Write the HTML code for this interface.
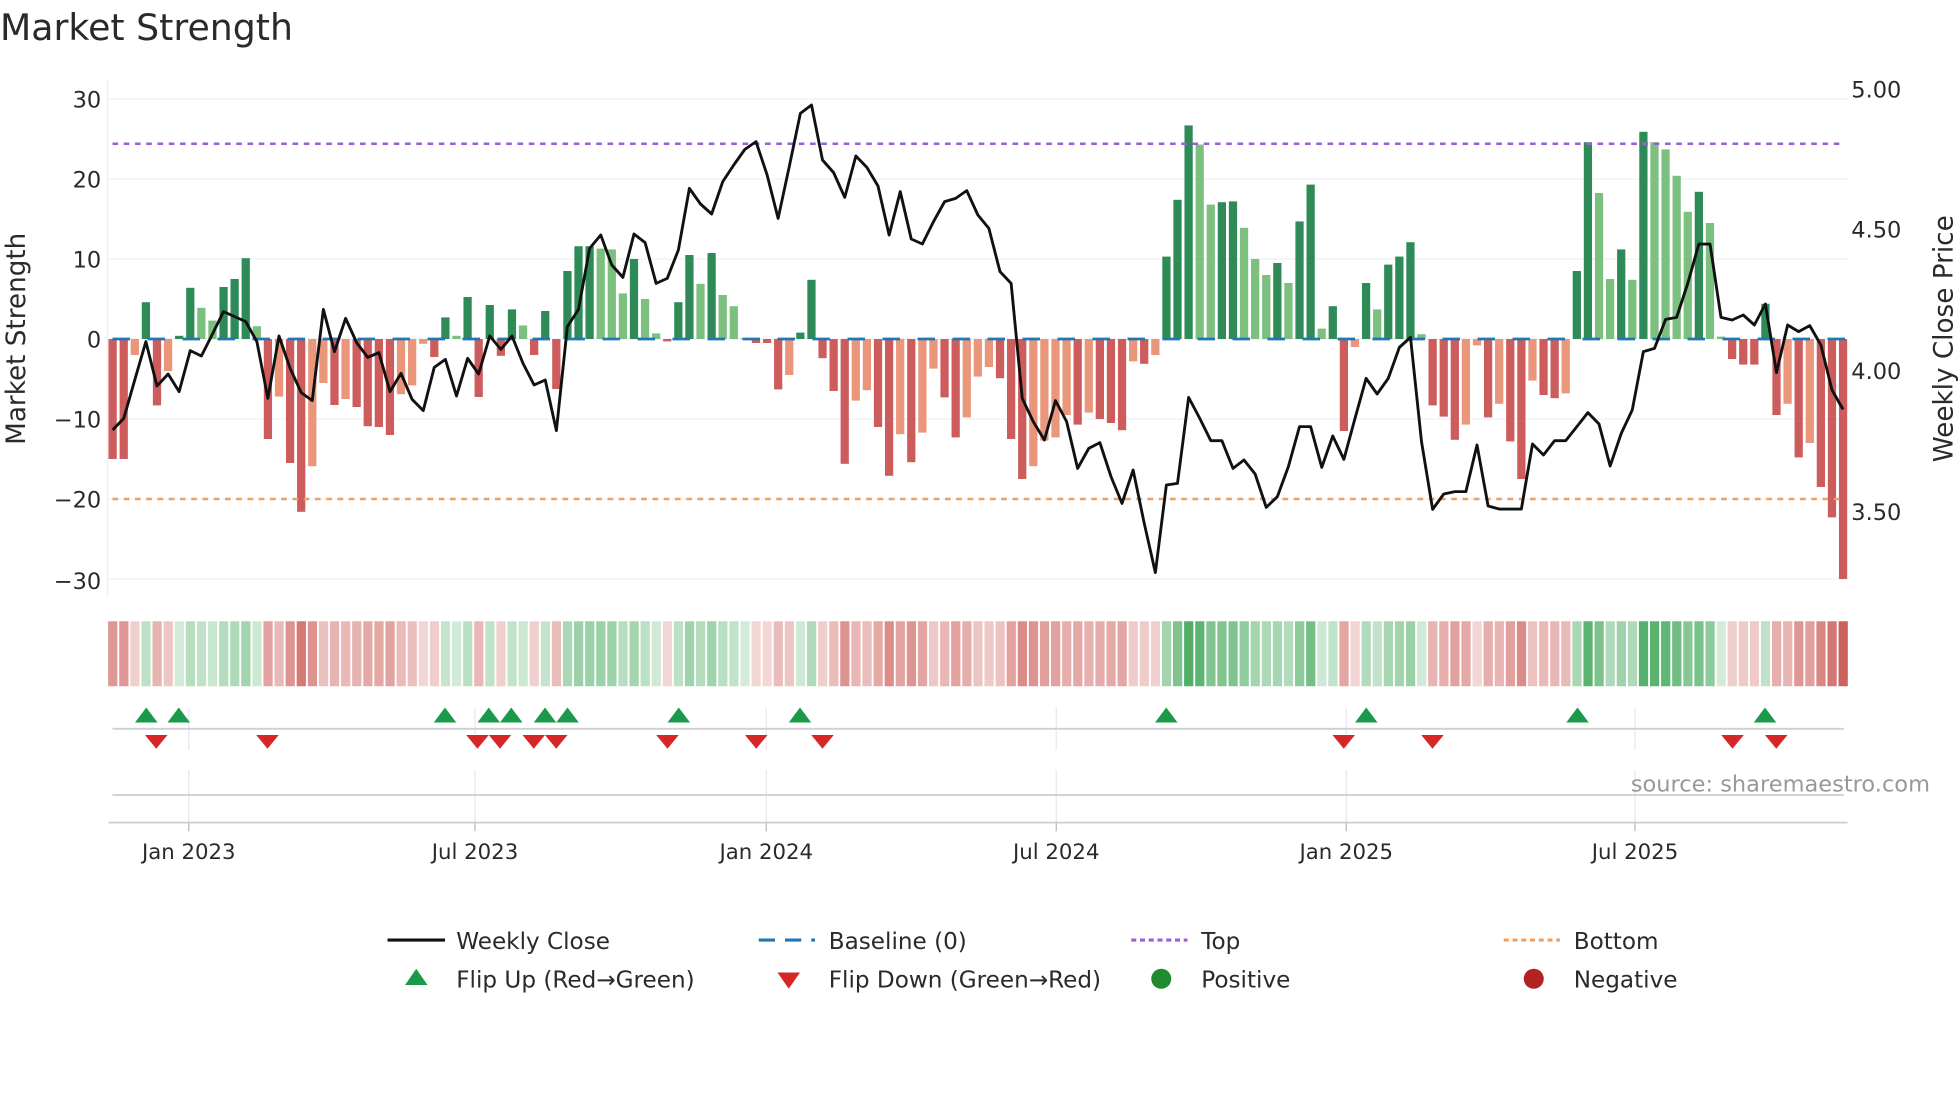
<!DOCTYPE html>
<html><head><meta charset="utf-8">
<style>
html,body{margin:0;padding:0;background:#fff;}
svg{display:block;}
text{font-family:"DejaVu Sans","Liberation Sans",sans-serif;fill:#2a2a2a;}
</style></head>
<body>
<svg id="s" width="1960" height="1102" viewBox="0 0 1568 881.6" xmlns="http://www.w3.org/2000/svg">
<rect width="1568" height="882" fill="#fff"/>
<text x="0" y="32" font-size="29">Market Strength</text>
<g id="grid"></g>
<g id="bars"></g>
<g id="lines"></g>
<g id="strip"></g>
<g id="marks"></g>
<g id="axes">
<text x="81" y="86" font-size="18" text-anchor="end">30</text>
<text x="81" y="150" font-size="18" text-anchor="end">20</text>
<text x="81" y="214" font-size="18" text-anchor="end">10</text>
<text x="81" y="278" font-size="18" text-anchor="end">0</text>
<text x="81" y="342" font-size="18" text-anchor="end">−10</text>
<text x="81" y="406" font-size="18" text-anchor="end">−20</text>
<text x="81" y="471" font-size="18" text-anchor="end">−30</text>
<text x="1481" y="78" font-size="18">5.00</text>
<text x="1481" y="190" font-size="18">4.50</text>
<text x="1481" y="303" font-size="18">4.00</text>
<text x="1481" y="416" font-size="18">3.50</text>
<text transform="translate(20,271) rotate(-90)" font-size="21" text-anchor="middle">Market Strength</text>
<text transform="translate(1562,271) rotate(-90)" font-size="21" text-anchor="middle">Weekly Close Price</text>
<text x="151" y="687" font-size="17" text-anchor="middle">Jan 2023</text>
<text x="380" y="687" font-size="17" text-anchor="middle">Jul 2023</text>
<text x="613" y="687" font-size="17" text-anchor="middle">Jan 2024</text>
<text x="845" y="687" font-size="17" text-anchor="middle">Jul 2024</text>
<text x="1077" y="687" font-size="17" text-anchor="middle">Jan 2025</text>
<text x="1308" y="687" font-size="17" text-anchor="middle">Jul 2025</text>
<text x="1544" y="633" font-size="18" text-anchor="end" style="fill:#999">source: sharemaestro.com</text>
</g>
<g id="legend" font-size="18.5">
<line x1="310" y1="752" x2="356" y2="752" stroke="#111" stroke-width="2.5"/>
<text x="365" y="759">Weekly Close</text>
<line x1="607" y1="752" x2="652" y2="752" stroke="#1f77b4" stroke-width="2.5" stroke-dasharray="13,8"/>
<text x="663" y="759">Baseline (0)</text>
<line x1="905" y1="752" x2="950" y2="752" stroke="#9a5fd8" stroke-width="2.5" stroke-dasharray="4,3"/>
<text x="961" y="759">Top</text>
<line x1="1203" y1="752" x2="1248" y2="752" stroke="#f0a060" stroke-width="2.5" stroke-dasharray="4,3"/>
<text x="1259" y="759">Bottom</text>
<polygon points="324,788 342,788 333,775" fill="#1a9a48"/>
<text x="365" y="790">Flip Up (Red→Green)</text>
<polygon points="622,778 640,778 631,791" fill="#d62728"/>
<text x="663" y="790">Flip Down (Green→Red)</text>
<circle cx="929" cy="783" r="8" fill="#1e8c2e"/>
<text x="961" y="790">Positive</text>
<circle cx="1227" cy="783" r="8" fill="#b22222"/>
<text x="1259" y="790">Negative</text>
</g>
</svg>
<script>
var V=[-15,-15,-2,4.6,-8.3,-4,0.4,6.4,3.9,2.3,6.5,7.5,10.1,1.6,-12.5,-7.2,-15.5,-21.6,-15.9,-5.5,-8.25,-7.5,-8.5,-10.9,-11,-12,-6.9,-5.8,-0.6,-2.25,2.7,0.4,5.25,-7.25,4.25,-2.1,3.7,1.7,-2,3.5,-6.25,
8.5,11.6,11.6,11.3,11.2,5.7,10,5,0.7,-0.3,4.6,10.5,6.9,10.75,5.5,4.1,0.1,-0.5,-0.5,-6.3,-4.5,0.8,7.4,-2.4,-6.5,-15.6,-7.7,-6.4,-11,-17.1,-11.9,-15.4,-11.7,-3.7,-7.3,-12.3,-9.8,-4.7,-3.5,
-4.9,-12.5,-17.5,-15.9,-12.7,-12.3,-9.5,-10.7,-9.2,-10,-10.5,-11.4,-2.8,-3.1,-2,10.3,17.4,26.7,24.3,16.8,17.1,17.2,13.9,10,8,9.5,7,14.7,19.3,1.3,4.1,-11.5,-1,7,3.7,9.3,10.3,12.1,0.6,-8.3,
-9.7,-12.6,-10.7,-0.8,-9.8,-8.1,-12.8,-17.5,-5.2,-7,-7.4,-6.8,8.5,24.6,18.25,7.5,11.2,7.4,25.9,24.6,23.7,20.4,15.9,18.4,14.5,0.3,-2.5,-3.2,-3.2,4.4,-9.5,-8.1,-14.8,-13,-18.5,-22.3,-30];
var L=[1050,1015,900,785,918,882,935,812,828,762,695,710,725,785,955,768,865,938,962,688,815,715,788,832,818,935,880,958,992,862,838,948,835,882,768,808,768,850,915,900,1052,
740,688,505,465,555,592,462,488,610,595,510,325,372,402,305,255,208,185,285,415,260,100,75,240,278,352,228,262,318,465,335,477,492,425,365,355,332,405,445,
575,610,955,1025,1080,962,1025,1165,1105,1088,1190,1270,1170,1330,1478,1215,1210,952,1015,1082,1082,1165,1140,1182,1282,1250,1160,1040,1040,1162,1068,1138,1015,895,942,895,802,772,1085,1288,
1242,1235,1235,1095,1278,1287,1287,1287,1092,1125,1082,1082,1040,998,1032,1158,1060,990,815,805,718,712,610,492,492,712,720,705,735,672,878,735,755,737,795,930,988];
var NS="http://www.w3.org/2000/svg";
function el(p,t,a){var e=document.createElementNS(NS,t);for(var k in a)e.setAttribute(k,a[k]);document.getElementById(p).appendChild(e);return e;}
var x0=90.1,dx=8.874,y0=271.2,ky=6.4;
for(var g=-30;g<=30;g+=10){el("grid","line",{x1:86,x2:1478,y1:y0-g*ky,y2:y0-g*ky,stroke:"#eef0f6","stroke-width":1});}
el("grid","line",{x1:86,x2:86,y1:64,y2:478,stroke:"#eef0f6","stroke-width":1});
var dates=[151,380,613,845,1077,1308];
dates.forEach(function(d){el("grid","line",{x1:d,x2:d,y1:566,y2:600,stroke:"#e6e8ee","stroke-width":1});el("grid","line",{x1:d,x2:d,y1:616,y2:665,stroke:"#e6e8ee","stroke-width":1});});
el("grid","line",{x1:90,x2:1475,y1:583,y2:583,stroke:"#d0d0d0","stroke-width":1.5});
el("grid","line",{x1:90,x2:1475,y1:636,y2:636,stroke:"#d0d0d0","stroke-width":1.5});
el("grid","line",{x1:87,x2:1478,y1:658,y2:658,stroke:"#d0d0d0","stroke-width":1.5});
dates.forEach(function(d){el("grid","line",{x1:d,x2:d,y1:658,y2:665,stroke:"#bbb","stroke-width":1});});
for(var i=0;i<V.length;i++){var v=V[i],p=i?V[i-1]:0,x=x0+i*dx;
 var dark=(Math.sign(v)!=Math.sign(p))||Math.abs(v)>=Math.abs(p);
 var c=v>=0?(dark?"#2e8b57":"#7cc07f"):(dark?"#cd5c5c":"#e9967a");
 var h=Math.abs(v)*ky;el("bars","rect",{x:x-3.3,y:v>=0?y0-h:y0,width:6.6,height:Math.max(h,0.8),fill:c});
 var t=Math.min(1,Math.abs(v)/27);var a=0.22+0.68*t;
 var sc=v>=0?"rgba(60,165,85,"+a+")":"rgba(200,80,75,"+a+")";
 el("strip","rect",{x:x-3.6,y:497,width:7.4,height:52,fill:sc});
}
el("lines","line",{x1:90,x2:1476,y1:115,y2:115,stroke:"#9a5fd8","stroke-width":2,"stroke-dasharray":"4.5,4.5"});
el("lines","line",{x1:90,x2:1476,y1:y0+20*ky,y2:y0+20*ky,stroke:"#f0a060","stroke-width":2,"stroke-dasharray":"4.5,4.5"});
el("lines","line",{x1:90,x2:1476,y1:y0,y2:y0,stroke:"#1f77b4","stroke-width":2.2,"stroke-dasharray":"14,14"});
var pts=L.map(function(z,i){return (x0+i*dx).toFixed(1)+","+(64+z/3.75).toFixed(1);}).join(" ");
el("lines","polyline",{points:pts,fill:"none",stroke:"#111","stroke-width":2.3,"stroke-linejoin":"round"});
[117,143,356,391,409,436,454,543,640,933,1093,1262,1412].forEach(function(x){el("marks","polygon",{points:(x-9)+",578 "+(x+9)+",578 "+x+",566",fill:"#1a9a48"});});
[125,214,382,400,427,445,534,605,658,1075,1146,1386,1421].forEach(function(x){el("marks","polygon",{points:(x-9)+",588 "+(x+9)+",588 "+x+",599",fill:"#d62728"});});
</script>
</body></html>
